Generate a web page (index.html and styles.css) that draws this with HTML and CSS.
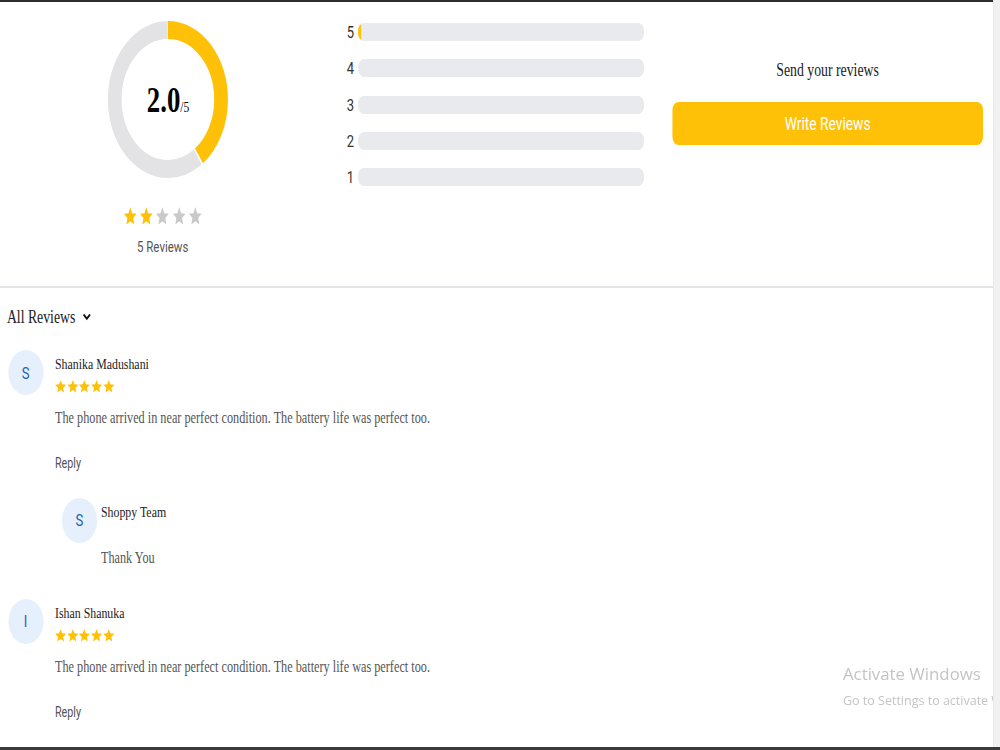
FILE: index.html
```html
<!DOCTYPE html>
<html lang="en">
<head>
    <meta charset="UTF-8">
    <meta name="viewport" content="width=device-width, initial-scale=1.0">
    <title>Product Reviews</title>
    <link rel="stylesheet" href="styles.css">
</head>
<body>
    <div class="topbar"></div>
    <div class="page">
        <section class="summary">
            <div class="score">
                <div class="donut">
                    <svg width="157" height="157" viewBox="0 0 157 157">
                        <circle class="ring-track" cx="78.5" cy="78.5" r="69.5"></circle>
                        <circle class="ring-fill" cx="78.5" cy="78.5" r="69.5"></circle>
                    </svg>
                    <div class="donut-value"><strong>2.0</strong><span>/5</span></div>
                </div>
                <div class="stars stars-lg">
                    <svg viewBox="2 2 20 19" preserveAspectRatio="none" class="on"><path d="M12 17.27L18.18 21l-1.64-7.03L22 9.24l-7.19-.61L12 2 9.19 8.63 2 9.24l5.46 4.73L5.82 21z"/></svg>
                    <svg viewBox="2 2 20 19" preserveAspectRatio="none" class="on"><path d="M12 17.27L18.18 21l-1.64-7.03L22 9.24l-7.19-.61L12 2 9.19 8.63 2 9.24l5.46 4.73L5.82 21z"/></svg>
                    <svg viewBox="2 2 20 19" preserveAspectRatio="none"><path d="M12 17.27L18.18 21l-1.64-7.03L22 9.24l-7.19-.61L12 2 9.19 8.63 2 9.24l5.46 4.73L5.82 21z"/></svg>
                    <svg viewBox="2 2 20 19" preserveAspectRatio="none"><path d="M12 17.27L18.18 21l-1.64-7.03L22 9.24l-7.19-.61L12 2 9.19 8.63 2 9.24l5.46 4.73L5.82 21z"/></svg>
                    <svg viewBox="2 2 20 19" preserveAspectRatio="none"><path d="M12 17.27L18.18 21l-1.64-7.03L22 9.24l-7.19-.61L12 2 9.19 8.63 2 9.24l5.46 4.73L5.82 21z"/></svg>
                </div>
                <div class="review-count">5 Reviews</div>
            </div>

            <div class="breakdown">
                <div class="bar-row"><span class="bar-label">5</span><div class="bar"><div class="bar-fill" style="width: 1%;"></div></div></div>
                <div class="bar-row"><span class="bar-label">4</span><div class="bar"><div class="bar-fill" style="width: 0%;"></div></div></div>
                <div class="bar-row"><span class="bar-label">3</span><div class="bar"><div class="bar-fill" style="width: 0%;"></div></div></div>
                <div class="bar-row"><span class="bar-label">2</span><div class="bar"><div class="bar-fill" style="width: 0%;"></div></div></div>
                <div class="bar-row"><span class="bar-label">1</span><div class="bar"><div class="bar-fill" style="width: 0%;"></div></div></div>
            </div>

            <div class="cta">
                <p>Send your reviews</p>
                <button type="button">Write Reviews</button>
            </div>
        </section>

        <section class="reviews">
            <div class="reviews-filter">
                All Reviews
                <svg width="11" height="8" viewBox="0 0 11 8"><path d="M1.3 1.5l4.2 4.2 4.2-4.2"/></svg>
            </div>

            <div class="review">
                <div class="avatar">S</div>
                <div class="review-body">
                    <div class="review-name">Shanika Madushani</div>
                    <div class="stars stars-sm">
                        <svg viewBox="2 2 20 19" preserveAspectRatio="none" class="on"><path d="M12 17.27L18.18 21l-1.64-7.03L22 9.24l-7.19-.61L12 2 9.19 8.63 2 9.24l5.46 4.73L5.82 21z"/></svg>
                        <svg viewBox="2 2 20 19" preserveAspectRatio="none" class="on"><path d="M12 17.27L18.18 21l-1.64-7.03L22 9.24l-7.19-.61L12 2 9.19 8.63 2 9.24l5.46 4.73L5.82 21z"/></svg>
                        <svg viewBox="2 2 20 19" preserveAspectRatio="none" class="on"><path d="M12 17.27L18.18 21l-1.64-7.03L22 9.24l-7.19-.61L12 2 9.19 8.63 2 9.24l5.46 4.73L5.82 21z"/></svg>
                        <svg viewBox="2 2 20 19" preserveAspectRatio="none" class="on"><path d="M12 17.27L18.18 21l-1.64-7.03L22 9.24l-7.19-.61L12 2 9.19 8.63 2 9.24l5.46 4.73L5.82 21z"/></svg>
                        <svg viewBox="2 2 20 19" preserveAspectRatio="none" class="on"><path d="M12 17.27L18.18 21l-1.64-7.03L22 9.24l-7.19-.61L12 2 9.19 8.63 2 9.24l5.46 4.73L5.82 21z"/></svg>
                    </div>
                    <p class="review-text">The phone arrived in near perfect condition. The battery life was perfect too.</p>
                    <div class="reply-link">Reply</div>
                    <div class="reply">
                        <div class="avatar">S</div>
                        <div class="reply-body">
                            <div class="review-name">Shoppy Team</div>
                            <p class="reply-text">Thank You</p>
                        </div>
                    </div>
                </div>
            </div>

            <div class="review">
                <div class="avatar">I</div>
                <div class="review-body">
                    <div class="review-name">Ishan Shanuka</div>
                    <div class="stars stars-sm">
                        <svg viewBox="2 2 20 19" preserveAspectRatio="none" class="on"><path d="M12 17.27L18.18 21l-1.64-7.03L22 9.24l-7.19-.61L12 2 9.19 8.63 2 9.24l5.46 4.73L5.82 21z"/></svg>
                        <svg viewBox="2 2 20 19" preserveAspectRatio="none" class="on"><path d="M12 17.27L18.18 21l-1.64-7.03L22 9.24l-7.19-.61L12 2 9.19 8.63 2 9.24l5.46 4.73L5.82 21z"/></svg>
                        <svg viewBox="2 2 20 19" preserveAspectRatio="none" class="on"><path d="M12 17.27L18.18 21l-1.64-7.03L22 9.24l-7.19-.61L12 2 9.19 8.63 2 9.24l5.46 4.73L5.82 21z"/></svg>
                        <svg viewBox="2 2 20 19" preserveAspectRatio="none" class="on"><path d="M12 17.27L18.18 21l-1.64-7.03L22 9.24l-7.19-.61L12 2 9.19 8.63 2 9.24l5.46 4.73L5.82 21z"/></svg>
                        <svg viewBox="2 2 20 19" preserveAspectRatio="none" class="on"><path d="M12 17.27L18.18 21l-1.64-7.03L22 9.24l-7.19-.61L12 2 9.19 8.63 2 9.24l5.46 4.73L5.82 21z"/></svg>
                    </div>
                    <p class="review-text">The phone arrived in near perfect condition. The battery life was perfect too.</p>
                    <div class="reply-link">Reply</div>
                </div>
            </div>
        </section>
    </div>

    <!-- desktop overlays from the screen capture -->
    <div class="watermark">
        <div class="watermark-title">Activate Windows</div>
        <div class="watermark-sub">Go to Settings to activate Windows.</div>
    </div>
    <div class="scrollbar"></div>
    <div class="taskbar"></div>
</body>
</html>
```

FILE: styles.css
```css
html,
body {
    height: 100%;
}
body {
    margin: 0;
    overflow: hidden;
    background: #fff;
    color: #222;
    font-family: "Liberation Serif", "Times New Roman", serif;
}
.topbar {
    height: 2px;
    background-color: #2e2e2e;
}

/* the capture is squeezed sideways, so the page is laid out wide and scaled */
.page {
    width: 1300px;
    transform: scaleX(0.765);
    transform-origin: 0 0;
}

/* ---- rating summary ---- */
.summary {
    display: grid;
    grid-template-columns: repeat(3, 1fr);
    align-items: start;
    box-sizing: border-box;
    height: 286px;
    padding-top: 19px;
    border-bottom: 2px solid #e4e4e9;
}
.score {
    display: flex;
    flex-direction: column;
    align-items: center;
    padding-right: 8px;
}
.donut {
    display: grid;
    place-items: center;
    width: 157px;
    height: 157px;
    margin-left: 14px;
}
.donut > * {
    grid-area: 1 / 1;
}
.donut svg {
    transform: rotate(-90deg);
}
.ring-track,
.ring-fill {
    fill: none;
    stroke-width: 18;
}
.ring-track {
    stroke: #e3e3e5;
    stroke-dasharray: 259 437;
    stroke-dashoffset: -176.6;
}
.ring-fill {
    stroke: #ffc107;
    stroke-dasharray: 174.7 437;
}
.donut-value {
    padding-top: 2px;
    color: #000;
}
.donut-value strong {
    font-size: 35px;
}
.donut-value span {
    font-size: 15px;
}

.stars {
    display: flex;
}
.stars svg {
    display: block;
    fill: #c9c9cb;
}
.stars svg.on {
    fill: #ffc107;
}
.stars-lg {
    gap: 4.7px;
    margin-top: 28.7px;
}
.stars-lg svg {
    width: 16.6px;
    height: 17.6px;
}
.review-count {
    margin-top: 12.7px;
    font-family: Roboto, "Liberation Sans", sans-serif;
    font-size: 15px;
    line-height: 20px;
    color: #555;
}

.breakdown {
    display: flex;
    flex-direction: column;
    gap: 18.3px;
    padding: 2px 25px 0 20px;
}
.bar-row {
    display: flex;
    align-items: center;
    height: 18px;
}
.bar-label {
    width: 14.5px;
    font-family: Roboto, "Liberation Sans", sans-serif;
    font-size: 17px;
    line-height: 18px;
    color: #333;
}
.bar {
    flex: 1;
    height: 18px;
    border-radius: 8px;
    background-color: #e9eaee;
    overflow: hidden;
}
.bar-fill {
    height: 100%;
    background-color: #ffc107;
}

.cta {
    padding: 39px 15px 0 12px;
    text-align: center;
}
.cta p {
    margin: 0;
    font-size: 18px;
    line-height: 20px;
}
.cta button {
    width: 100%;
    height: 43px;
    margin-top: 22px;
    border: none;
    border-radius: 8px;
    background-color: #ffc107;
    color: #fff;
    font-family: Roboto, "Liberation Sans", sans-serif;
    font-size: 18px;
    cursor: pointer;
}

/* ---- review list ---- */
.reviews {
    padding: 19px 0 0 9px;
}
.reviews-filter {
    display: flex;
    align-items: center;
    gap: 9px;
    font-size: 18px;
    line-height: 20px;
}
.reviews-filter svg {
    fill: none;
    stroke: #111;
    stroke-width: 2.3;
}
.review {
    display: flex;
    margin-top: 23px;
}
.review + .review {
    margin-top: 31px;
}
.avatar {
    display: flex;
    align-items: center;
    justify-content: center;
    flex-shrink: 0;
    width: 46px;
    height: 45px;
    margin-left: 1.5px;
    border-radius: 50%;
    background-color: #e6f0fc;
    color: #1a5fb8;
    font-family: Roboto, "Liberation Sans", sans-serif;
    font-size: 17px;
}
.review-body {
    margin-left: 15.4px;
    padding-top: 3.8px;
}
.review-name {
    font-size: 15.5px;
    line-height: 20px;
    color: #222;
}
.stars-sm {
    gap: 1.2px;
    margin-top: 6.5px;
}
.stars-sm svg {
    width: 14.5px;
    height: 12.5px;
}
.review-text {
    margin: 15px 0 0;
    font-size: 16px;
    line-height: 20px;
    color: #555;
}
.reply-link {
    margin-top: 25.8px;
    font-family: Roboto, "Liberation Sans", sans-serif;
    font-size: 14px;
    line-height: 18px;
    color: #555;
    cursor: pointer;
}
.reply {
    display: flex;
    margin: 26.2px 0 0 8.8px;
}
.reply .avatar {
    margin-left: 0;
}
.reply-body {
    margin-left: 5.3px;
    padding-top: 4.2px;
}
.reply-text {
    margin: 26px 0 0;
    font-size: 16px;
    line-height: 20px;
    color: #555;
}

/* ---- screen capture chrome ---- */
.watermark {
    position: fixed;
    left: 843px;
    top: 663px;
    color: #c4c4c4;
    font-family: "Open Sans", "Noto Sans", sans-serif;
    white-space: nowrap;
}
.watermark-title {
    font-size: 16.8px;
    line-height: 22px;
}
.watermark-sub {
    margin-top: 7px;
    font-size: 12.5px;
    line-height: 18px;
}
.scrollbar {
    position: fixed;
    top: 0;
    right: 0;
    bottom: 0;
    width: 6px;
    background-color: #f1f1f2;
    border-left: 1px solid #e8e8ea;
}
.taskbar {
    position: fixed;
    left: 0;
    right: 0;
    bottom: 0;
    height: 3px;
    background-color: #3a3a3a;
}
```
